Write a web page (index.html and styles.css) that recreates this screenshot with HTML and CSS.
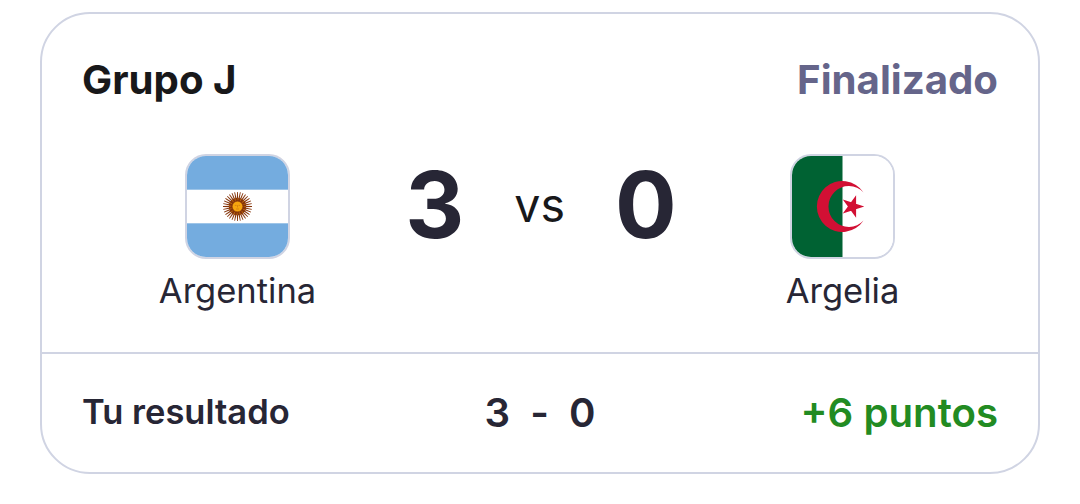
FILE: index.html
```html
<!DOCTYPE html>
<html lang="es">
<head>
    <meta charset="UTF-8">
    <meta name="viewport" content="width=device-width, initial-scale=1.0">
    <title>Argentina vs Argelia</title>
    <link rel="stylesheet" href="styles.css">
</head>
<body>
    <div class="card">
        <div class="match">
            <div class="match-header">
                <span class="group">Grupo J</span>
                <span class="status">Finalizado</span>
            </div>

            <div class="match-body">
                <div class="team">
                    <div class="flag">
                        <svg viewBox="0 0 101 101" aria-hidden="true">
                            <defs>
                                <path id="ray" d="M50.1 36 L50.9 36 L51.2 45 L51.2 56 L50.9 65 L50.1 65 L49.8 56 L49.8 45 Z"/>
                                <g id="rays">
                                    <use href="#ray"/>
                                    <use href="#ray" transform="rotate(11.25 50.5 50.5)"/>
                                    <use href="#ray" transform="rotate(22.5 50.5 50.5)"/>
                                    <use href="#ray" transform="rotate(33.75 50.5 50.5)"/>
                                </g>
                            </defs>
                            <rect width="101" height="101" fill="#74acdf"/>
                            <rect y="33.7" width="101" height="33.6" fill="#fff"/>
                            <g fill="#85340a">
                                <use href="#rays"/>
                                <use href="#rays" transform="rotate(45 50.5 50.5)"/>
                                <use href="#rays" transform="rotate(90 50.5 50.5)"/>
                                <use href="#rays" transform="rotate(135 50.5 50.5)"/>
                            </g>
                            <circle cx="50.5" cy="50.5" r="7" fill="none" stroke="#85340a" stroke-width="3.4"/>
                            <circle cx="50.5" cy="50.5" r="7.4" fill="none" stroke="#c8760f" stroke-width="2.4" stroke-dasharray=".7 2.2"/>
                            <circle cx="50.5" cy="50.5" r="5.2" fill="#f6a50f" stroke="#85340a" stroke-width=".4"/>
                            <path d="M47.8 49.4h1.7M51.5 49.4h1.7M50.5 49.2v2.2M49 53h3" fill="none" stroke="#b9650c" stroke-width=".5"/>
                        </svg>
                    </div>
                    <span class="team-name">Argentina</span>
                </div>

                <div class="score">
                    <span class="goals">3</span>
                    <span class="vs">vs</span>
                    <span class="goals">0</span>
                </div>

                <div class="team">
                    <div class="flag">
                        <svg viewBox="0 0 101 101" aria-hidden="true">
                            <rect width="101" height="101" fill="#fff"/>
                            <rect width="50.5" height="101" fill="#006233"/>
                            <path d="M71.6 36.4 A25.5 25.5 0 1 0 71.6 64.6 A20.4 20.4 0 1 1 71.6 36.4 Z" fill="#d21034"/>
                            <path d="M72.3 50.5 L50.8 57.5 L64.1 39.2 L64.1 61.8 L50.8 43.5 Z" fill="#d21034"/>
                        </svg>
                    </div>
                    <span class="team-name">Argelia</span>
                </div>
            </div>
        </div>

        <div class="result">
            <span class="result-label">Tu resultado</span>
            <div class="result-score">
                <span>3</span>
                <span>-</span>
                <span>0</span>
            </div>
            <span class="points">+6 puntos</span>
        </div>
    </div>
</body>
</html>
```
FILE: styles.css
```css
* {
    box-sizing: border-box;
}

body {
    margin: 0;
    padding: 12px 40px;
    background-color: #fff;
    color: #272635;
    font-family: Inter, sans-serif;
}

.card {
    height: 462px;
    display: flex;
    flex-direction: column;
    border: 2px solid #d0d4e3;
    border-radius: 50px;
    background-color: #fff;
    overflow: hidden;
}

.match {
    height: 338px;
    padding: 42px 40px 0;
}

.match-header {
    display: flex;
    justify-content: space-between;
    font-size: 40.2px;
    font-weight: 700;
    line-height: 48px;
}

.group {
    color: #18181a;
}

.status {
    color: #65658a;
}

.match-body {
    display: grid;
    grid-template-columns: 311px 1fr 311px;
    margin-top: 50px;
}

.team {
    display: flex;
    flex-direction: column;
    align-items: center;
    gap: 11px;
}

.flag {
    width: 105px;
    height: 105px;
    border: 2px solid #d0d4e3;
    border-radius: 21px;
    overflow: hidden;
}

.flag svg {
    display: block;
    width: 100%;
    height: 100%;
}

.team-name {
    font-size: 34.5px;
    line-height: 42px;
}

.score {
    height: 101px;
    display: flex;
    align-items: center;
    justify-content: center;
    gap: 50px;
    padding-left: 2px;
}

.goals {
    font-size: 91.5px;
    font-weight: 700;
    line-height: 101px;
}

.vs {
    color: #18181a;
    font-size: 46.5px;
    line-height: 54px;
}

.result {
    flex: 1;
    display: grid;
    grid-template-columns: 1fr auto 1fr;
    align-items: center;
    padding: 0 40px 2px;
    border-top: 2px solid #d0d4e3;
    font-size: 40.2px;
    font-weight: 600;
}

.result-label {
    padding-bottom: 2px;
    font-size: 34.5px;
}

.result-score {
    display: flex;
    gap: 20px;
}

.points {
    color: #228b22;
    text-align: right;
}
```
